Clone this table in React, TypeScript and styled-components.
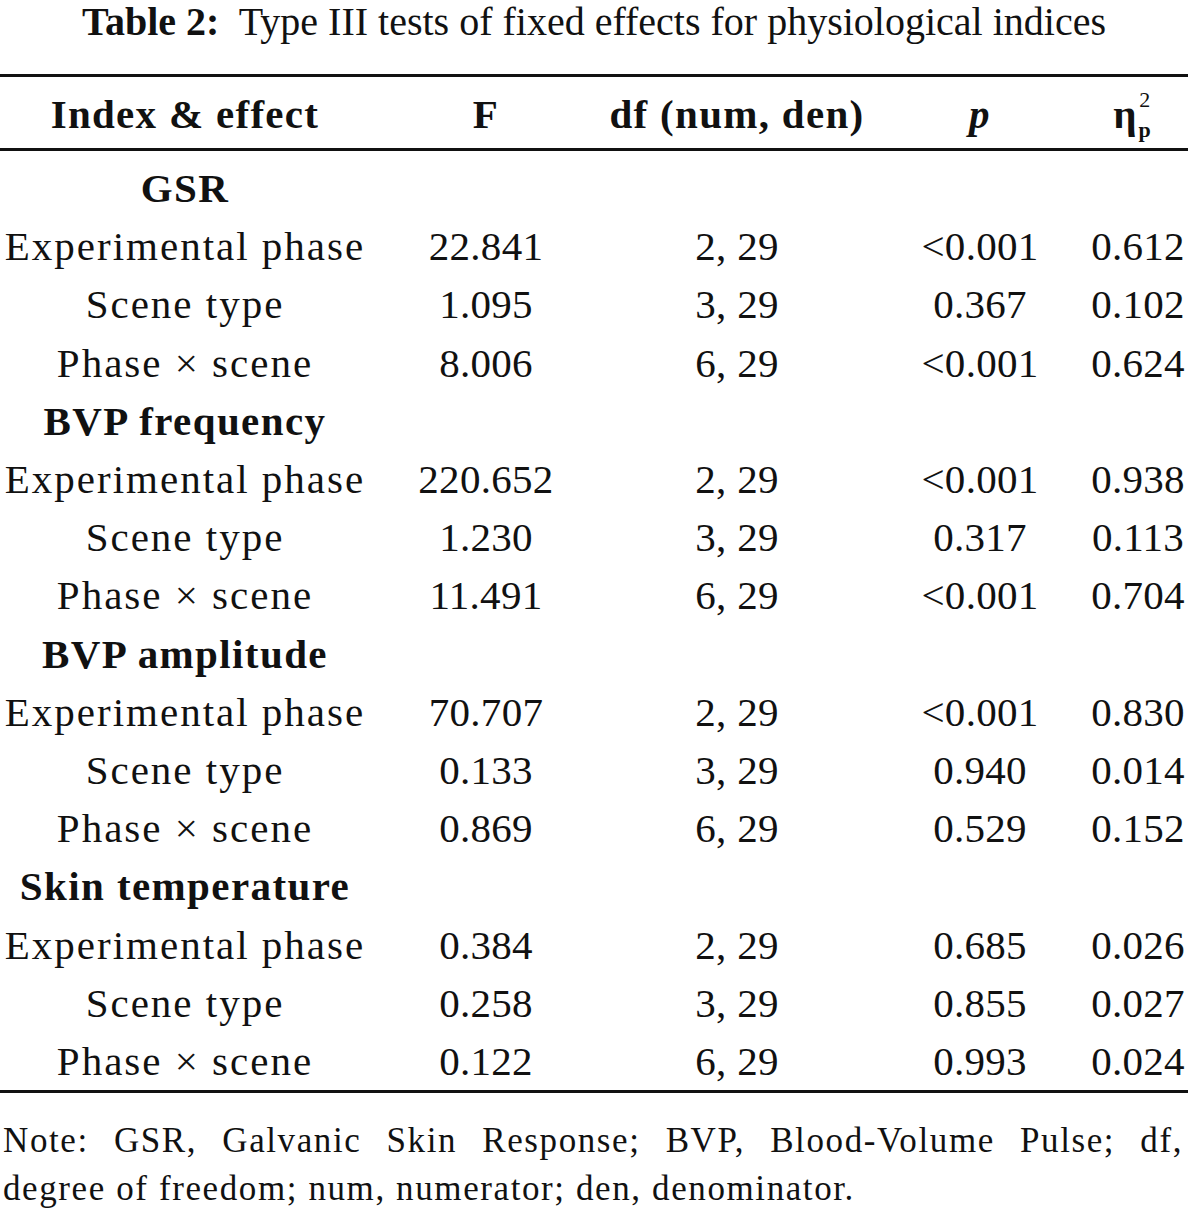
import styled, { createGlobalStyle } from 'styled-components';

type Row = [string, string, string, string, string];

const sections: { title: string; rows: Row[] }[] = [
  {
    title: 'GSR',
    rows: [
      ['Experimental phase', '22.841', '2, 29', '<0.001', '0.612'],
      ['Scene type', '1.095', '3, 29', '0.367', '0.102'],
      ['Phase × scene', '8.006', '6, 29', '<0.001', '0.624'],
    ],
  },
  {
    title: 'BVP frequency',
    rows: [
      ['Experimental phase', '220.652', '2, 29', '<0.001', '0.938'],
      ['Scene type', '1.230', '3, 29', '0.317', '0.113'],
      ['Phase × scene', '11.491', '6, 29', '<0.001', '0.704'],
    ],
  },
  {
    title: 'BVP amplitude',
    rows: [
      ['Experimental phase', '70.707', '2, 29', '<0.001', '0.830'],
      ['Scene type', '0.133', '3, 29', '0.940', '0.014'],
      ['Phase × scene', '0.869', '6, 29', '0.529', '0.152'],
    ],
  },
  {
    title: 'Skin temperature',
    rows: [
      ['Experimental phase', '0.384', '2, 29', '0.685', '0.026'],
      ['Scene type', '0.258', '3, 29', '0.855', '0.027'],
      ['Phase × scene', '0.122', '6, 29', '0.993', '0.024'],
    ],
  },
];

export default function App() {
  return (
    <>
      <GlobalStyle />
      <Page>
        <Caption>
          <strong>Table 2:</strong>&nbsp; Type III tests of fixed effects for physiological indices
        </Caption>

        <HeaderRow>
          <HeadCell>Index &amp; effect</HeadCell>
          <HeadCell>F</HeadCell>
          <HeadCell>df (num, den)</HeadCell>
          <HeadCell><Italic>p</Italic></HeadCell>
          <HeadCell>
            <Eta>
              η
              <Scripts>
                <Sup>2</Sup>
                <Sub>p</Sub>
              </Scripts>
            </Eta>
          </HeadCell>
        </HeaderRow>

        <Body>
          {sections.map((section) => (
            <div key={section.title}>
              <DataRow>
                <Cell $label $bold>{section.title}</Cell>
              </DataRow>
              {section.rows.map((row) => (
                <DataRow key={section.title + row[0]}>
                  {row.map((value, i) => (
                    <Cell key={i} $label={i === 0}>{value}</Cell>
                  ))}
                </DataRow>
              ))}
            </div>
          ))}
        </Body>

        <Note>
          <NoteLine $full>Note: GSR, Galvanic Skin Response; BVP, Blood-Volume Pulse; df,</NoteLine>
          <NoteLine>degree of freedom; num, numerator; den, denominator.</NoteLine>
        </Note>
      </Page>
    </>
  );
}

const GlobalStyle = createGlobalStyle`
  body {
    margin: 0;
    background: #ffffff;
    color: #111111;
    font-family: "Liberation Serif", "Times New Roman", serif;
  }
`;

const Page = styled.div`
  width: 1188px;
`;

const Caption = styled.div`
  text-align: center;
  font-size: 40px;
  line-height: 44px;
  margin-bottom: 30px;
  white-space: nowrap;

  strong {
    font-weight: bold;
  }
`;

const columns = '370px 232px 270px 216px 100px';

const HeaderRow = styled.div`
  display: grid;
  grid-template-columns: ${columns};
  border-top: 3px solid #111;
  border-bottom: 3px solid #111;
  padding-top: 4px;
  font-size: 41px;
  line-height: 67px;
  font-weight: bold;
`;

const HeadCell = styled.div`
  text-align: center;
  letter-spacing: 1.3px;
  white-space: nowrap;
`;

const Italic = styled.span`
  font-style: italic;
`;

const Eta = styled.span`
  display: inline-flex;
  align-items: center;
  padding-right: 12px;
  letter-spacing: 0;
`;

const Scripts = styled.span`
  display: inline-flex;
  flex-direction: column;
  gap: 6px;
  font-size: 22px;
  line-height: 24px;
  margin-left: 2px;
`;

const Sup = styled.span`
  font-weight: normal;
`;

const Sub = styled.span`
  font-weight: bold;
`;

const Body = styled.div`
  padding-top: 8px;
  border-bottom: 3px solid #111;
`;

const DataRow = styled.div`
  display: grid;
  grid-template-columns: ${columns};
  font-size: 41px;
  line-height: 58.2px;
`;

const Cell = styled.div<{ $label?: boolean; $bold?: boolean }>`
  text-align: center;
  white-space: nowrap;
  font-weight: ${(p) => (p.$bold ? 'bold' : 'normal')};
  letter-spacing: ${(p) => (p.$label ? (p.$bold ? '1.4px' : '2px') : '0.3px')};
`;

const Note = styled.div`
  margin: 24px 5px 0 3px;
  font-size: 35px;
  line-height: 48px;
  letter-spacing: 1.6px;
`;

const NoteLine = styled.div<{ $full?: boolean }>`
  text-align: ${(p) => (p.$full ? 'justify' : 'left')};
  text-align-last: ${(p) => (p.$full ? 'justify' : 'auto')};
  white-space: nowrap;
`;
